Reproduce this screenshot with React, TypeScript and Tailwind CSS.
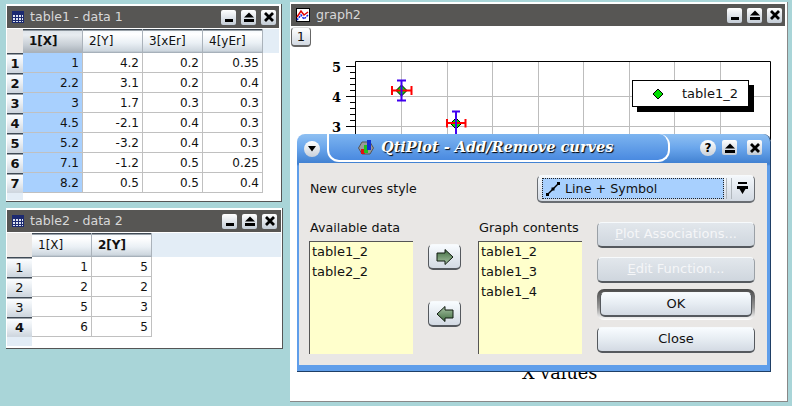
const font = "font-['DejaVu_Sans',sans-serif]";

function MinIcon() {
  return (
    <svg width="14" height="14" viewBox="0 0 14 14"><rect x="3" y="9" width="8" height="3" fill="#000" /></svg>
  );
}
function ShadeIcon() {
  return (
    <svg width="14" height="14" viewBox="0 0 14 14"><path d="M7 2.5L12 7.5H2Z" fill="#000" /><rect x="2" y="9" width="10" height="3" fill="#000" /></svg>
  );
}
function CloseIcon() {
  return (
    <svg width="14" height="14" viewBox="0 0 14 14"><path d="M3 3L11 11M11 3L3 11" stroke="#000" strokeWidth="2.8" /></svg>
  );
}
function WinBtn({ children }: { children: React.ReactNode }) {
  return (
    <div className="w-[15px] h-[15px] flex items-center justify-center bg-linear-to-b from-[#ffffff] to-[#c3ccd6] rounded-[2px]">
      {children}
    </div>
  );
}
function WinButtons() {
  return (
    <div className="flex gap-[5px]">
      <WinBtn><MinIcon /></WinBtn>
      <WinBtn><ShadeIcon /></WinBtn>
      <WinBtn><CloseIcon /></WinBtn>
    </div>
  );
}
function GridIcon() {
  return (
    <svg width="12" height="12" viewBox="0 0 12 12">
      <rect x="0" y="0" width="12" height="12" fill="#dfe4f0" />
      <rect x="0" y="0" width="12" height="3" fill="#1c2a70" />
      <path d="M0.5 0V12M3.5 0V12M6.5 0V12M9.5 0V12M11.5 0V12M0 3.5H12M0 6.5H12M0 9.5H12M0 11.5H12" stroke="#1c2a70" strokeWidth="1" />
    </svg>
  );
}
function GraphIcon() {
  return (
    <svg width="14" height="14" viewBox="0 0 14 14">
      <rect x="0.5" y="0.5" width="13" height="13" fill="#fff" stroke="#000" />
      <path d="M1 9L5 3L8 7L12 4" stroke="#e00000" strokeWidth="1.5" fill="none" />
      <path d="M1 12L5 7L8 11L12 7" stroke="#1020e0" strokeWidth="1.5" fill="none" strokeDasharray="2 1" />
    </svg>
  );
}
function TitleBar({ title, icon, right = "pr-[3px]" }: { title: string; icon: React.ReactNode; right?: string }) {
  return (
    <div className={`h-[22px] bg-[#575654] flex items-center justify-between pl-[5px] ${right}`}>
      <div className="flex items-center gap-[6px]">
        {icon}
        <span className="text-[12.6px] text-[#d8d8d8] leading-none">{title}</span>
      </div>
      <WinButtons />
    </div>
  );
}

const headGrad = "bg-[linear-gradient(#3f4a55_0,#3f4a55_1px,#f6fafd_2px,#ffffff_5px,#eaf0f5_14px,#cdd6de_22px,#9aa4ae_24px)]";
const headSel = "bg-[linear-gradient(#3f4a55_0,#3f4a55_1px,#dfe5ea_2px,#e8ecf0_6px,#c7ced5_16px,#aab2ba_23px)]";
const rowGrad = "bg-[linear-gradient(#3f4a55_0,#3f4a55_1px,#fbfdff_2px,#e9eef3_10px,#cfd7df_19px)]";

function DataTable({
  cols, rows, sel, rowW, headH, active,
}: {
  cols: string[]; rows: (string | number)[][]; sel: number; rowW: number; headH: number; active?: number;
}) {
  return (
    <div className="flex-1 bg-white flex flex-col text-[12px] text-[#111]">
      <div className="flex bg-[#e3edf6]" style={{ height: headH }}>
        <div className="bg-[#e9e7e5]" style={{ width: rowW }} />
        {cols.map((c, i) => (
          <div
            key={c}
            className={`w-[60px] border-r border-[#aab2ba] flex items-center pl-[6px] ${i === sel ? "font-bold" : ""} ${i === sel && sel === 0 && rowW < 20 ? headSel : headGrad}`}
          >
            {c}
          </div>
        ))}
      </div>
      {rows.map((r, ri) => (
        <div key={ri} className="flex h-[20px]">
          <div
            className={`flex items-center justify-center pt-[2px] text-[13px] ${rowGrad} ${active === undefined || active === ri ? "font-bold" : ""}`}
            style={{ width: rowW }}
          >
            {ri + 1}
          </div>
          {r.map((v, ci) => (
            <div
              key={ci}
              className={`w-[60px] border-r border-b border-[#c0c0c0] flex items-center justify-end pr-[3px] ${ci === 0 && rowW < 20 ? "bg-[#a8d0fe]" : ""}`}
            >
              {v}
            </div>
          ))}
        </div>
      ))}
      <div className="flex-1 bg-white">
        <div className="h-full bg-[#e3edf6]" style={{ width: rowW }} />
      </div>
    </div>
  );
}

function GlossBtn({ label, disabled, def, h }: { label: string; disabled?: boolean; def?: boolean; h: string }) {
  const first = label.charAt(0);
  const rest = label.slice(1);
  return (
    <div className={`w-[158px] ${h} flex items-center justify-center ${def ? "rounded-[7px] bg-[linear-gradient(#4a4a4a,#9a9a9a_60%,#ffffff)] p-[3px]" : ""}`}>
      <div
        className={`w-full h-full rounded-[5px] border-b-[2px] border-x border-[#55595e] border-t-[#f7fafc] border-t flex items-center justify-center text-[13px] pb-px ${
          disabled
            ? "bg-linear-to-b from-[#e2e7ec] to-[#cfd6de] text-[#f5f6f8] border-x-[#9aa0a6]"
            : "bg-linear-to-b from-[#f8fcff] via-[#e6ecf2] to-[#d3dae3] text-[#111]"
        }`}
      >
        {disabled ? (
          <span>
            <span className="underline">{first}</span>
            {rest}
          </span>
        ) : (
          label
        )}
      </div>
    </div>
  );
}

function ArrowBtn({ left }: { left?: boolean }) {
  return (
    <div className="w-[33px] h-[26px] rounded-[5px] border-b-[2px] border-x border-[#55595e] border-t border-t-[#f7fafc] bg-linear-to-b from-[#f8fcff] to-[#d3dae3] flex items-center justify-center">
      <svg width="18" height="16" viewBox="0 0 18 16" className={left ? "" : "rotate-180"}>
        <defs>
          <linearGradient id="ag" x1="0" x2="0" y1="0" y2="1">
            <stop offset="0" stopColor="#a9c4a5" />
            <stop offset="1" stopColor="#3f6b3f" />
          </linearGradient>
        </defs>
        <path d="M1 8L9 0.5V4H17V12H9V15.5Z" fill="url(#ag)" stroke="#101a10" strokeWidth="1" />
      </svg>
    </div>
  );
}

function ListBox({ items }: { items: string[] }) {
  return (
    <div className="w-[104px] h-[113px] bg-[#ffffcc] border-l border-t border-[#555] pl-[2px] text-[13px] text-[#111]">
      {items.map((t) => (
        <div key={t} className="h-[20px] flex items-center">{t}</div>
      ))}
    </div>
  );
}

function Plot() {
  const xs = [401, 447, 492, 538, 583, 629, 674, 720];
  const ys = [96, 126];
  return (
    <svg className="absolute left-0 top-0" width="792" height="406" viewBox="0 0 792 406">
      {xs.map((x) => (<line key={x} x1={x + 0.5} x2={x + 0.5} y1="61" y2="140" stroke="#bdbdbd" />))}
      {ys.map((y) => (<line key={y} x1="355" x2="770" y1={y + 0.5} y2={y + 0.5} stroke="#bdbdbd" />))}
      <path d="M355.5 140V61.5H770.5V140" fill="none" stroke="#000" />
      <path d="M346 66.5H355M346 96.5H355M346 126.5H355" stroke="#000" />
      <path d="M350 72.5H355M350 78.5H355M350 84.5H355M350 90.5H355M350 102.5H355M350 108.5H355M350 114.5H355M350 120.5H355" stroke="#000" />
      <path d="M401.5 85L407 90.5L401.5 96L396 90.5Z" fill="#00e000" stroke="#000" />
      <path d="M392 90.5H412M392 86V95M411.5 86V95" stroke="#f00" strokeWidth="2" fill="none" />
      <path d="M401.5 80V101M397 80.5H406M397 100.5H406" stroke="#4000f0" strokeWidth="2" fill="none" />
      <path d="M456 118L461.5 123.5L456 129L450.5 123.5Z" fill="#00e000" stroke="#000" />
      <path d="M446 123H466M447 119V127.5M465.5 119V127.5" stroke="#f00" strokeWidth="2" fill="none" />
      <path d="M456 111V140M452 111.5H460" stroke="#4000f0" strokeWidth="2" fill="none" />
    </svg>
  );
}

function Chip() {
  return (
    <svg width="16" height="17" viewBox="0 0 16 17">
      <path d="M4 3H12L15.5 9L12 15H4L0.5 9Z" fill="#9a9a9a" stroke="#555" />
      <rect x="3" y="10" width="4" height="5" fill="#e01010" />
      <rect x="6" y="6" width="4" height="8" fill="#20c020" />
      <rect x="9" y="1" width="4" height="10" fill="#1030d0" />
    </svg>
  );
}

const table1: (string | number)[][] = [
  [1, 4.2, 0.2, 0.35],
  [2.2, 3.1, 0.2, 0.4],
  [3, 1.7, 0.3, 0.3],
  [4.5, -2.1, 0.4, 0.3],
  [5.2, -3.2, 0.4, 0.3],
  [7.1, -1.2, 0.5, 0.25],
  [8.2, 0.5, 0.5, 0.4],
];
const table2 = [[1, 5], [2, 2], [5, 3], [6, 5]];

export default function App() {
  return (
    <div className={`relative w-[792px] h-[406px] overflow-hidden bg-[#a9d5d8] ${font}`}>
      {/* table1 */}
      <div className="absolute left-[6px] top-[4px] w-[276px] h-[198px] bg-white border-r border-b border-[#555] pt-[2px] pl-[1px] pr-[2px] pb-[1px] flex flex-col">
        <TitleBar title="table1 - data 1" icon={<GridIcon />} />
        <div className="h-px" />
        <DataTable cols={["1[X]", "2[Y]", "3[xEr]", "4[yEr]"]} rows={table1} sel={0} rowW={16} headH={24} />
      </div>
      {/* table2 */}
      <div className="absolute left-[6px] top-[208px] w-[277px] h-[141px] bg-white border-r border-b border-[#555] pt-[2px] pl-[1px] pr-[1px] pb-[2px] flex flex-col">
        <TitleBar title="table2 - data 2" icon={<GridIcon />} right="pr-[4px]" />
        <div className="h-px" />
        <DataTable cols={["1[X]", "2[Y]"]} rows={table2} sel={1} rowW={25} headH={24} active={3} />
      </div>
      {/* graph */}
      <div className="absolute left-[290px] top-[2px] w-[498px] h-[400px] bg-white border-r border-b border-[#888] pt-[2px] pl-[1px] pr-[2px]">
        <TitleBar title="graph2" icon={<GraphIcon />} />
        <div className="w-[20px] h-[20px] mt-px rounded-[4px] border border-[#666] border-t-[#ddd] border-b-2 bg-linear-to-b from-white to-[#d3dae3] flex items-center justify-center text-[13px] text-[#111]">
          1
        </div>
      </div>
      <Plot />
      <span className="absolute left-[332px] top-[58px] text-[13px] font-bold text-black font-['DejaVu_Serif',serif]">5</span>
      <span className="absolute left-[332px] top-[88px] text-[13px] font-bold text-black font-['DejaVu_Serif',serif]">4</span>
      <span className="absolute left-[332px] top-[118px] text-[13px] font-bold text-black font-['DejaVu_Serif',serif]">3</span>
      {/* legend */}
      <div className="absolute left-[632px] top-[80px] w-[117px] h-[27px] bg-white border border-black shadow-[5px_5px_0_#000] flex items-center pl-[19px] gap-[18px] text-[13px] text-[#111]">
        <svg width="12" height="12" viewBox="0 0 12 12"><path d="M6 1L11 6L6 11L1 6Z" fill="#00e000" stroke="#000" /></svg>
        <span>table1_2</span>
      </div>
      <span className="absolute left-[522px] top-[360px] text-[17.7px] font-['DejaVu_Serif',serif] text-black">X values</span>

      {/* dialog */}
      <div className="absolute left-[297px] top-[134px] w-[474px] h-[238px] border-b border-r border-[#1f3f66] rounded-t-[8px] flex flex-col pl-[2px] pr-[3px] pb-[6px] bg-[linear-gradient(#8fc0f2_0,#6aa6ec_14px,#3f7fd0_30px,#5f9eea_32px)]">
        <div className="h-[29px] shrink-0 relative flex items-center">
          <div className="absolute left-[5px] top-[7px] w-[16px] h-[16px] rounded-full bg-linear-to-b from-white to-[#c8d0da] flex items-center justify-center">
            <svg width="10" height="8" viewBox="0 0 10 8"><path d="M1 1H9L5 6.5Z" fill="#000" /></svg>
          </div>
          <div className="absolute left-[28px] top-0 w-[343px] h-[28px] rounded-b-[12px] rounded-tr-[11px] border-2 border-t-0 border-white bg-linear-to-b from-[#7cb4f0] to-[#4a8ae0] flex items-center pl-[29px] gap-[7px]">
            <Chip />
            <span className="font-['DejaVu_Serif',serif] italic font-bold text-[14.5px] text-white [text-shadow:1px_1px_1px_#000] whitespace-nowrap">QtiPlot - Add/Remove curves</span>
          </div>
          <div className="absolute left-[401px] top-[6px] flex gap-[6px]">
            <div className="w-[16px] h-[16px] rounded-full bg-linear-to-b from-white to-[#c8d0da] flex items-center justify-center text-[12px] font-bold leading-none text-black">?</div>
            <div className="flex gap-[10px]">
              <WinBtn><ShadeIcon /></WinBtn>
              <WinBtn><CloseIcon /></WinBtn>
            </div>
          </div>
        </div>
        <div className="flex-1 bg-[#e9e7e5] text-[13px] text-[#111] pl-[10px] pr-[12px] pt-[12px] flex flex-col">
          <div className="flex items-center justify-between h-[28px]">
            <span className="pl-px text-[12.5px]">New curves style</span>
            <div className="w-[218px] h-[28px] rounded-[5px] border-b-2 border-x border-t border-[#6a6e73] border-t-[#f7fafc] bg-linear-to-b from-[#f4f8fc] to-[#d3dae3] flex items-center pl-[4px] pr-[2px]">
              <div className="w-[182px] h-[21px] bg-[#a8d0fe] border border-dotted border-[#222] flex items-center pl-[3px] gap-[5px] whitespace-nowrap">
                <svg width="14" height="14" viewBox="0 0 14 14"><path d="M1 13L13 1" stroke="#000" strokeWidth="1.5" /><rect x="0" y="11" width="3" height="3" /><rect x="5.5" y="5.5" width="3" height="3" /><rect x="11" y="0" width="3" height="3" /></svg>
                <span className="text-[12.7px]">Line + Symbol</span>
              </div>
              <div className="ml-[2px] w-[6px] h-[21px] border-x border-[#b0b6bc]" />
              <div className="flex-1 flex justify-center">
                <svg width="11" height="13" viewBox="0 0 11 13"><rect x="1" y="0" width="9" height="2" /><path d="M0 4H11V7H8.5L5.5 12L2.5 7H0Z" /></svg>
              </div>
            </div>
          </div>
          <div className="flex mt-[18px]">
            <div className="w-[119px] flex flex-col">
              <div className="h-[20px] flex items-center pl-px pb-[6px] text-[12.7px]">Available data</div>
              <ListBox items={["table1_2", "table2_2"]} />
            </div>
            <div className="w-[50px] flex flex-col gap-[31px] pt-[23px]">
              <ArrowBtn />
              <ArrowBtn left />
            </div>
            <div className="w-[119px] flex flex-col">
              <div className="h-[20px] flex items-center pl-px pb-[6px] text-[12.9px]">Graph contents</div>
              <ListBox items={["table1_2", "table1_3", "table1_4"]} />
            </div>
            <div className="flex flex-col pt-[1px] items-start">
              <GlossBtn label="Plot Associations..." disabled h="h-[26px]" />
              <div className="h-[9px]" />
              <GlossBtn label="Edit Function..." disabled h="h-[26px]" />
              <div className="h-[6px]" />
              <GlossBtn label="OK" def h="h-[31px]" />
              <div className="h-[7px]" />
              <GlossBtn label="Close" h="h-[26px]" />
            </div>
          </div>
        </div>
      </div>
    </div>
  );
}
